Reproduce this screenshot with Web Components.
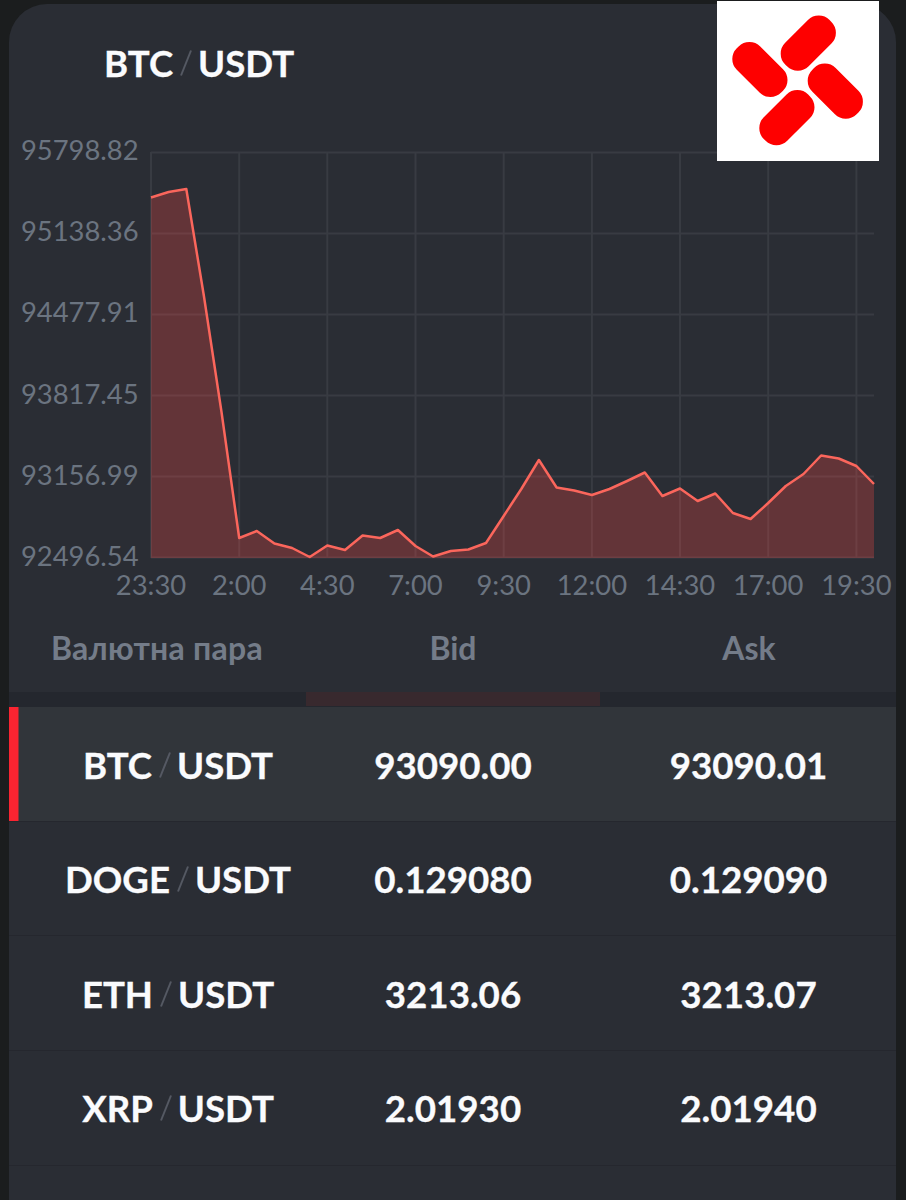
<!DOCTYPE html>
<html lang="uk">
<head>
<meta charset="utf-8">
<title>BTC / USDT</title>
<style>
html,body{margin:0;height:1200px;overflow:hidden;background:#1b1d1e}
body{font-family:Lato,"Open Sans",sans-serif;color:#fafbfd}
</style>
</head>
<body>
<rate-board>
  <currency-pair slot="title" base="BTC" quote="USDT"></currency-pair>
  <price-chart slot="chart"></price-chart>
  <table-head slot="head"><span style="letter-spacing:.25px">Валютна пара</span><span>Bid</span><span>Ask</span></table-head>
  <rate-row active base="BTC" quote="USDT" bid="93090.00" ask="93090.01"></rate-row>
  <rate-row base="DOGE" quote="USDT" bid="0.129080" ask="0.129090"></rate-row>
  <rate-row base="ETH" quote="USDT" bid="3213.06" ask="3213.07"></rate-row>
  <rate-row base="XRP" quote="USDT" bid="2.01930" ask="2.01940"></rate-row>
</rate-board>
<brand-logo></brand-logo>
<script>
const define = (name, render) => customElements.define(name, class extends HTMLElement {
  connectedCallback() {
    if (this.shadowRoot) return;
    this.attachShadow({ mode: "open" }).innerHTML = render(this);
  }
});

define("rate-board", () => `
<style>
:host{display:flex;flex-direction:column;box-sizing:border-box;height:1200px;padding:4px 10px 0 9px}
.card{flex:none;height:688px;background:#2a2d34;border-radius:38px 38px 0 0;display:flex;flex-direction:column}
.title{height:120px;box-sizing:border-box;padding:0 0 2px 95px;display:flex;align-items:center}
.gap{flex:none;height:15px;background:#24272e;display:grid;grid-template-columns:297px 294px 1fr}
.gap i{grid-column:2;background:#38292e;height:13.5px}
.rows{flex:1;background:#2a2d34;display:flex;flex-direction:column}
</style>
<section class="card"><div class="title"><slot name="title"></slot></div><slot name="chart"></slot><slot name="head"></slot></section>
<div class="gap"><i></i></div>
<div class="rows"><slot></slot></div>`);

define("currency-pair", el => `
<style>
:host{display:flex;align-items:center;font-size:36.6px;font-weight:700;line-height:46px;-webkit-text-stroke:.3px currentColor}
svg{width:12px;height:28px;margin:0 6px 0 7px}
</style>
<span>${el.getAttribute("base")}</span><svg viewBox="0 0 12 28"><path d="M1 26.5L11 1.5" stroke="#555963" stroke-width="2"/></svg><span>${el.getAttribute("quote")}</span>`);

define("table-head", () => `
<style>
:host{display:grid;grid-template-columns:296px 296px 296px;height:88px;align-items:center;text-align:center;color:#747c89;font-size:32px;font-weight:700;line-height:40px}
</style><slot></slot>`);

define("rate-row", el => `
<style>
:host{flex:none;display:grid;grid-template-columns:296px 296px 1fr;box-sizing:border-box;height:114.67px;padding-top:1.4px;align-items:center;text-align:center;font-size:36.7px;line-height:46px;font-weight:700;-webkit-text-stroke:.3px currentColor;border-bottom:1px solid #25272e}
:host([active]){background:#31353a;box-shadow:inset 9.5px 0 #fa2431}
currency-pair{justify-content:center;padding-left:42px}
</style>
<currency-pair base="${el.getAttribute("base")}" quote="${el.getAttribute("quote")}"></currency-pair>
<span>${el.getAttribute("bid")}</span><span>${el.getAttribute("ask")}</span>`);

define("price-chart", () => {
  const ys = [197.5,192,189,296,412,538,531,543.5,548,557,545.5,550,535.5,538,530,546,556.5,551,549.5,543,516,489,460,487.5,490.5,495,489,481,472.5,496,488.5,501,493.5,513,519,503,486,474,455.5,458.5,466,484];
  const x = i => +(151 + i * 17.634).toFixed(1);
  const line = ys.map((y, i) => `${x(i)},${y}`).join(" ");
  const prices = ["95798.82","95138.36","94477.91","93817.45","93156.99","92496.54"];
  const hours = ["23:30","2:00","4:30","7:00","9:30","12:00","14:30","17:00","19:30"];
  const gy = i => +(152.5 + i * 81).toFixed(1);
  return `
<style>
:host{display:block;height:480px}
svg{display:block;width:887px;height:480px}
text{font-size:27.4px;fill:#6b7480}
.p{text-anchor:end}.h{text-anchor:middle}
</style>
<svg viewBox="9 124 887 480">
<g stroke="#383b42" stroke-width="2">${prices.map((_, i) => `<path d="M151 ${gy(i)}H874"/>`).join("")}${hours.map((_, i) => `<path d="M${x(i * 5)} 152V558"/>`).join("")}</g>
<polygon points="151,558 ${line} 874,558" fill="#ff4a45" fill-opacity=".27"/>
<polyline points="${line}" fill="none" stroke="#fb665c" stroke-width="2.5" stroke-linejoin="round"/>
${prices.map((t, i) => `<text class="p" x="138.6" y="${160 + Math.round(i * 81.2)}">${t}</text>`).join("")}
${hours.map((t, i) => `<text class="h" x="${x(i * 5)}" y="595">${t}</text>`).join("")}
</svg>`;
});

define("brand-logo", () => `
<style>
:host{position:absolute;left:717.4px;top:1px;width:161.3px;height:160px;background:#fff}
svg{display:block;width:161.3px;height:160px}
</style>
<svg viewBox="717.4 1 161.3 160" fill="#fe0000">
<rect x="-31.4" y="-16.6" width="62.8" height="33.2" rx="15.3" transform="translate(808.7 43.2) rotate(-45)"/>
<rect x="-31.4" y="-16.6" width="62.8" height="33.2" rx="15.3" transform="translate(760.3 69.5) rotate(45)"/>
<rect x="-31.4" y="-16.6" width="62.8" height="33.2" rx="15.3" transform="translate(835.7 91.2) rotate(45)"/>
<rect x="-31.4" y="-16.6" width="62.8" height="33.2" rx="15.3" transform="translate(787.3 117.7) rotate(-45)"/>
</svg>`);
</script>
</body>
</html>
